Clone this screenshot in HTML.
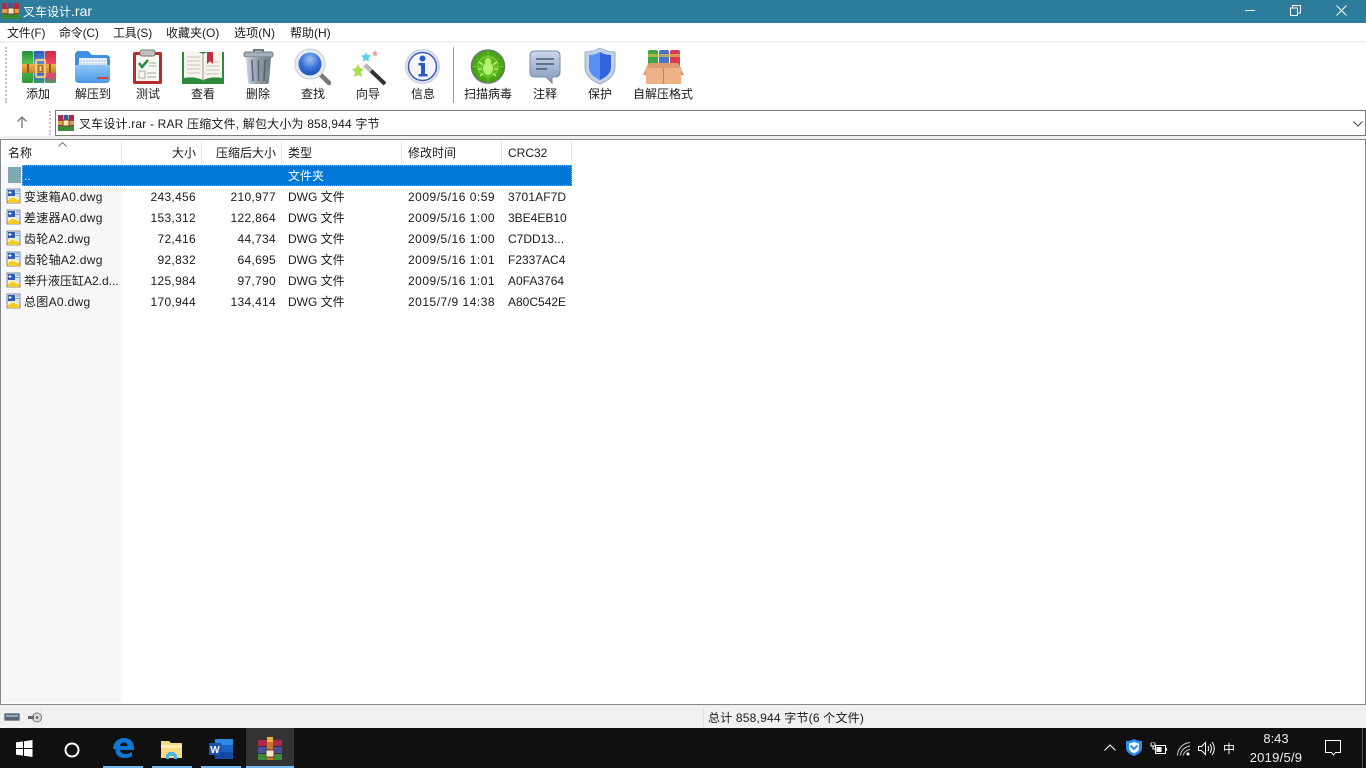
<!DOCTYPE html>
<html lang="zh"><head><meta charset="utf-8"><title>叉车设计.rar</title>
<style>
html,body{margin:0;padding:0;width:1366px;height:768px;overflow:hidden;background:#fff}
body{font-family:"Liberation Sans","Noto Sans CJK SC",sans-serif;font-size:12px;color:#1a1a1a;position:relative}
.a{position:absolute;white-space:nowrap;line-height:16px}
.b{position:absolute}
.r{text-align:right}
.c{text-align:center}
.n{letter-spacing:.3px}
.d{letter-spacing:.5px}
.h{letter-spacing:.1px}
svg{position:absolute;overflow:visible}
</style></head><body>
<svg width="0" height="0"><defs>
<linearGradient id="g1" x1="0" y1="0" x2="0" y2="1"><stop offset="0" stop-color="#1f8f3a"/><stop offset=".35" stop-color="#58c048"/><stop offset="1" stop-color="#2f9a3e"/></linearGradient>
<linearGradient id="g2" x1="0" y1="0" x2="0" y2="1"><stop offset="0" stop-color="#2a5cb8"/><stop offset=".4" stop-color="#5a8ae0"/><stop offset=".8" stop-color="#3a68c8"/><stop offset="1" stop-color="#2fa060"/></linearGradient>
<linearGradient id="g3" x1="0" y1="0" x2="0" y2="1"><stop offset="0" stop-color="#d02840"/><stop offset=".45" stop-color="#f05068"/><stop offset=".8" stop-color="#d84a70"/><stop offset="1" stop-color="#38a858"/></linearGradient>
<linearGradient id="gb" x1="0" y1="0" x2="0" y2="1"><stop offset="0" stop-color="#f0b048"/><stop offset="1" stop-color="#c88428"/></linearGradient>
<linearGradient id="gf" x1="0" y1="0" x2="0" y2="1"><stop offset="0" stop-color="#8ec6f6"/><stop offset="1" stop-color="#4a98e8"/></linearGradient>
<linearGradient id="gt" x1="0" y1="0" x2="1" y2="0"><stop offset="0" stop-color="#c8d2da"/><stop offset=".5" stop-color="#8e9ca8"/><stop offset="1" stop-color="#6e7c88"/></linearGradient>
<radialGradient id="gm" cx=".5" cy=".3" r=".8"><stop offset="0" stop-color="#a0c4f4"/><stop offset=".5" stop-color="#3a72d8"/><stop offset="1" stop-color="#1c48a8"/></radialGradient>
<radialGradient id="gv" cx=".5" cy=".5" r=".55"><stop offset="0" stop-color="#72d020"/><stop offset="1" stop-color="#3c9810"/></radialGradient>
<linearGradient id="gs" x1="0" y1="0" x2="0" y2="1"><stop offset="0" stop-color="#ccd8ea"/><stop offset="1" stop-color="#8298bc"/></linearGradient>
<g id="f"><rect x="1" y="1" width="13" height="14" fill="#dce8fa" stroke="#3a4a68" stroke-width=".6"/><rect x="2" y="2" width="7" height="6" fill="#2e5cb0"/><path d="M4 3v3M2.500 4.500h3" stroke="#fff"/><path d="M10 3h3M9 5.500h4" stroke="#7a9ad0"/><path d="M1.500 15V11l5-3 7 3.500V15z" fill="#f4cc28"/><path d="M1.500 11l5-3 7 3.500v1l-7-3-5 3z" fill="#fff6c0"/></g>
</defs></svg>
<div class="b" style="left:0;top:0;width:1366px;height:23px;background:#2e7c9b"></div>
<svg style="left:2px;top:2px" width="18" height="18" viewBox="0 0 18 18"><rect x="0" y="1" width="5" height="16" fill="#a03050"/><rect x="6" y="1" width="5" height="16" fill="#3a5aa0"/><rect x="12" y="1" width="5" height="16" fill="#b02a3a"/><rect x="0" y="12" width="17" height="5" fill="#3a8a3a"/><rect x="0" y="7" width="17" height="4" fill="#d9a050"/><rect x="6" y="6" width="6" height="6" fill="#f4e4c0" stroke="#7a4a20"/></svg>
<div class="a" style="left:23px;top:3px;color:#fff;font-size:12px">叉车设计<span style="font-size:14px">.rar</span></div>
<div class="b" style="left:1245px;top:10px;width:10px;height:1px;background:#fff"></div>
<svg style="left:1290px;top:5px" width="11" height="11" fill="none" stroke="#fff"><path d="M.5 3h7v7.500h-7zM2.500 3V.5h8v7.500H8"/></svg>
<svg style="left:1336px;top:5px" width="11" height="11" fill="none" stroke="#fff"><path d="M.5.5l10 10M10.500.5l-10 10"/></svg>

<div class="a" style="left:7px;top:25px;letter-spacing:-.2px">文件(F)</div>
<div class="a" style="left:59px;top:25px;letter-spacing:-.2px">命令(C)</div>
<div class="a" style="left:113px;top:25px;letter-spacing:-.2px">工具(S)</div>
<div class="a" style="left:166px;top:25px">收藏夹(O)</div>
<div class="a" style="left:234px;top:25px;letter-spacing:.1px">选项(N)</div>
<div class="a" style="left:290px;top:25px">帮助(H)</div>
<div class="b" style="left:0;top:41px;width:1366px;height:2px;background:#f0f0f0"></div>
<div class="b" style="left:5px;top:47px;height:56px;border-left:2px dotted #c4c4c4"></div>

<!-- toolbar icons -->
<svg style="left:22px;top:50px" width="34" height="34" viewBox="0 0 34 34"><rect x="0" y="1" width="11" height="32" rx="1.500" fill="url(#g1)"/><rect x="11.500" y="1" width="11" height="32" rx="1.500" fill="url(#g2)"/><rect x="23" y="1" width="11" height="32" rx="1.500" fill="url(#g3)"/><rect x="0" y="14" width="34" height="9" fill="url(#gb)"/><rect x="5" y="14" width="2" height="9" fill="#8a5a20"/><rect x="27" y="14" width="2" height="9" fill="#8a5a20"/><rect x="14" y="10" width="9" height="17" rx="1" fill="none" stroke="#e8c880" stroke-width="2.200"/><rect x="16" y="15" width="5" height="7" fill="#a86a20"/><rect x="17.500" y="16" width="2" height="5" fill="#f6d890"/></svg>
<svg style="left:75px;top:50px" width="36" height="34" viewBox="0 0 36 34"><path d="M0 5q0-4 4-4h9l4 4h14q4 0 4 4v20H0z" fill="#3f8fe0"/><rect x="4" y="8" width="28" height="14" fill="#e8f0fa"/><path d="M5 11h26M5 14h26" stroke="#a8bcd8" stroke-dasharray="2 1"/><path d="M0 15h35v14q0 4-4 4H4q-4 0-4-4z" fill="url(#gf)"/><rect x="22" y="27" width="11" height="2" fill="#d8443c"/></svg>
<svg style="left:133px;top:50px" width="29" height="34" viewBox="0 0 29 34"><rect x="0" y="2" width="29" height="32" rx="2" fill="#b62c2c"/><rect x="3" y="5" width="23" height="26" fill="#f6f6f2"/><rect x="7" y="0" width="15" height="6" rx="2" fill="#c0c0c0" stroke="#777"/><path d="M6 13l3 4 6-7" fill="none" stroke="#2c8a3c" stroke-width="2.500"/><path d="M16 13h7M16 16h7M14 23h9M14 27h9" stroke="#aaa"/><rect x="6" y="21" width="6" height="7" fill="none" stroke="#aaa"/></svg>
<svg style="left:182px;top:50px" width="42" height="34" viewBox="0 0 42 34"><path d="M0 2h42v32H0z" fill="#2d8a3c"/><path d="M2 2q10-3 19 2v26q-9-4-19-2z" fill="#f6f4ec"/><path d="M40 2q-10-3-19 2v26q9-4 19-2z" fill="#f6f4ec"/><path d="M5 7h13M5 11h13M5 15h13M5 19h13M5 23h13M24 12h13M24 16h13M24 20h13M24 24h13" stroke="#c4c4be"/><path d="M25 2h6v12l-3-3-3 3z" fill="#c03040"/><path d="M21 4v27" stroke="#999"/></svg>
<svg style="left:243px;top:49px" width="31" height="35" viewBox="0 0 31 35"><path d="M11 3V1h9v2" fill="none" stroke="#777" stroke-width="2"/><rect x="1" y="3" width="29" height="5" rx="2" fill="#a4b0ba" stroke="#6a7680"/><path d="M3 8h25l-2 25q0 2-3 2H8q-3 0-3-2z" fill="url(#gt)"/><path d="M9 11l1 21M15.500 11v21M22 11l-1 21" stroke="#55626e" stroke-width="1.500"/></svg>
<svg style="left:294px;top:48px" width="37" height="37" viewBox="0 0 37 37"><path d="M26 26l9 9" stroke="#777" stroke-width="4.500" stroke-linecap="round"/><circle cx="16" cy="16" r="15" fill="#e6ebf2" stroke="#c4cedb"/><circle cx="16" cy="16" r="11.500" fill="url(#gm)"/></svg>
<svg style="left:352px;top:50px" width="35" height="35" viewBox="0 0 35 35"><path d="M13 15l20 19" stroke="#333" stroke-width="4"/><path d="M13 15l6 6" stroke="#bbb" stroke-width="4"/><path d="M6 14l2 4 4 1-3 3 1 5-4-2-4 2 1-5-3-3 4-1z" fill="#a4e050"/><path d="M14 2l1.500 3 3.500.5-2.500 2.500.5 3.500-3-1.500-3 1.500.5-3.500L9 5.500l3.500-.5z" fill="#58d0e8"/><path d="M23 0l1 2 2 .5-1.500 1.500.5 2.500-2-1-2 1 .5-2.500L20 2.500l2-.5z" fill="#f0a0a8"/></svg>
<svg style="left:405px;top:49px" width="35" height="35" viewBox="0 0 35 35"><circle cx="17.500" cy="17.500" r="17" fill="#dfe4f2" stroke="#c4cce0"/><circle cx="17.500" cy="17.500" r="14" fill="#f4f6fc" stroke="#3e5cb4" stroke-width="1.500"/><circle cx="17.500" cy="9.500" r="3" fill="#2a58c8"/><path d="M13.500 14h6.500v11h2.500v2.500h-9V25h2.500v-8.500h-2.500z" fill="#2a58c8"/></svg>
<div class="b" style="left:453px;top:47px;width:1px;height:56px;background:#9a9a9a"></div>
<svg style="left:471px;top:49px" width="34" height="35" viewBox="0 0 34 35"><circle cx="17" cy="17.500" r="16.500" fill="url(#gv)" stroke="#6a7a6a" stroke-width="1.500"/><circle cx="17" cy="17.500" r="10" fill="none" stroke="#88dc40" opacity=".7"/><path d="M17 1v33M1 17.500h32" stroke="#88dc40" opacity=".5"/><ellipse cx="17" cy="19.500" rx="5" ry="6.500" fill="#b8f070"/><circle cx="17" cy="12" r="3" fill="#b8f070"/><path d="M12 16l-4-3M22 16l4-3M11 20H7M23 20h4M12 24l-3 3M22 24l3 3" stroke="#b8f070" stroke-width="1.500"/></svg>
<svg style="left:529px;top:50px" width="32" height="34" viewBox="0 0 32 34"><path d="M6 1h20q5 0 5 5v16q0 5-5 5h-3v6l-6-6H6q-5 0-5-5V6q0-5 5-5z" fill="url(#gs)" stroke="#7a8ca8"/><path d="M7 9h18M7 14h18M7 19h11" stroke="#4a5a70" stroke-width="1.500"/></svg>
<svg style="left:585px;top:48px" width="30" height="36" viewBox="0 0 30 36"><path d="M15 0q7 4 15 4v15q0 11-15 17Q0 30 0 19V4q8 0 15-4z" fill="#c4d2e8" stroke="#9aacc4"/><path d="M15 4q5 3 11 3v12q0 8-11 13Q4 27 4 19V7q6 0 11-3z" fill="#2e64e0"/><path d="M15 4v28Q4 27 4 19V7q6 0 11-3z" fill="#5a90f4"/></svg>
<svg style="left:643px;top:49px" width="41" height="35" viewBox="0 0 41 35"><rect x="5" y="1" width="10" height="17" rx="2" fill="#42a648"/><rect x="16" y="1" width="10" height="17" rx="2" fill="#4a74c8"/><rect x="27" y="1" width="10" height="17" rx="2" fill="#d83a50"/><rect x="5" y="5" width="32" height="3" fill="#d8c050" opacity=".7"/><path d="M3 19h35v16H3z" fill="#eeb086"/><path d="M6 14l-6 12h3v-7zM35 14l6 12h-3v-7z" fill="#d8906a"/><path d="M6 14h29l3 5H3z" fill="#e09a70"/><path d="M20.500 19v16" stroke="#c87e5a"/></svg>

<div class="a c" style="left:18px;top:86px;width:40px">添加</div>
<div class="a c" style="left:68px;top:86px;width:50px">解压到</div>
<div class="a c" style="left:128px;top:86px;width:40px">测试</div>
<div class="a c" style="left:183px;top:86px;width:40px">查看</div>
<div class="a c" style="left:238px;top:86px;width:40px">删除</div>
<div class="a c" style="left:293px;top:86px;width:40px">查找</div>
<div class="a c" style="left:348px;top:86px;width:40px">向导</div>
<div class="a c" style="left:403px;top:86px;width:40px">信息</div>
<div class="a c" style="left:458px;top:86px;width:60px">扫描病毒</div>
<div class="a c" style="left:525px;top:86px;width:40px">注释</div>
<div class="a c" style="left:580px;top:86px;width:40px">保护</div>
<div class="a c" style="left:628px;top:86px;width:70px">自解压格式</div>

<!-- address bar -->
<svg style="left:16px;top:116px" width="12" height="12" fill="none" stroke="#808080" stroke-width="1.500"><path d="M6 12V1M1.500 5.500L6 1l4.500 4.500"/></svg>
<div class="b" style="left:49px;top:111px;height:24px;border-left:2px dotted #c8c8c8"></div>
<div class="b" style="left:55px;top:110px;width:1309px;height:24px;border:1px solid #7a7a7a;background:#fff"></div>
<svg style="left:58px;top:115px" width="16" height="16" viewBox="0 0 16 16"><rect x="0" y="0" width="5" height="16" fill="#a03050"/><rect x="5.500" y="0" width="5" height="16" fill="#3a5aa0"/><rect x="11" y="0" width="5" height="16" fill="#b02a3a"/><rect x="0" y="11" width="16" height="5" fill="#3a8a3a"/><rect x="0" y="6" width="16" height="4" fill="#d9a050"/><rect x="5" y="5" width="6" height="6" fill="#f4e4c0" stroke="#7a4a20"/></svg>
<div class="a" style="left:79px;top:116px;letter-spacing:.18px">叉车设计.rar - RAR 压缩文件, 解包大小为 858,944 字节</div>
<svg style="left:1353px;top:121px" width="10" height="6" fill="none" stroke="#444"><path d="M.5.500L5 5 9.500.5"/></svg>
<div class="b" style="left:0;top:136px;width:1366px;height:3px;background:#f0f0f0"></div>

<!-- list -->
<div class="b" style="left:0;top:139px;width:1364px;height:564px;border:1px solid #828790;background:#fff"></div>
<div class="b" style="left:1px;top:165px;width:121px;height:538px;background:#f7f7f7"></div>
<div class="b" style="left:121px;top:141px;width:1px;height:24px;background:#e5e5e5"></div>
<div class="b" style="left:201px;top:141px;width:1px;height:24px;background:#e5e5e5"></div>
<div class="b" style="left:281px;top:141px;width:1px;height:24px;background:#e5e5e5"></div>
<div class="b" style="left:401px;top:141px;width:1px;height:24px;background:#e5e5e5"></div>
<div class="b" style="left:501px;top:141px;width:1px;height:24px;background:#e5e5e5"></div>
<div class="b" style="left:571px;top:141px;width:1px;height:24px;background:#e5e5e5"></div>
<svg style="left:58px;top:142px" width="9" height="5" fill="none" stroke="#777"><path d="M.5 4.500L4.500.5l4 4"/></svg>
<div class="a" style="left:8px;top:145px">名称</div>
<div class="a r" style="left:122px;top:145px;width:74px">大小</div>
<div class="a r" style="left:202px;top:145px;width:74px">压缩后大小</div>
<div class="a" style="left:288px;top:145px">类型</div>
<div class="a" style="left:408px;top:145px">修改时间</div>
<div class="a" style="left:508px;top:145px">CRC32</div>

<div class="b" style="left:8px;top:167px;width:13px;height:16px;background:#7fa9b0"></div>
<div class="b" style="left:22px;top:165px;width:550px;height:21px;background:#0078d7;outline:1px dotted #8ab4d8;outline-offset:-1px"></div>
<div class="a" style="left:24px;top:168px;color:#fff">..</div>
<div class="a" style="left:288px;top:168px;color:#fff">文件夹</div>

<svg style="left:6px;top:188px" width="15" height="15"><use href="#f"/></svg>
<svg style="left:6px;top:209px" width="15" height="15"><use href="#f"/></svg>
<svg style="left:6px;top:230px" width="15" height="15"><use href="#f"/></svg>
<svg style="left:6px;top:251px" width="15" height="15"><use href="#f"/></svg>
<svg style="left:6px;top:272px" width="15" height="15"><use href="#f"/></svg>
<svg style="left:6px;top:293px" width="15" height="15"><use href="#f"/></svg>

<div class="a n" style="left:24px;top:189px">变速箱A0.dwg</div><div class="a r n" style="left:122px;top:189px;width:74px">243,456</div><div class="a r n" style="left:202px;top:189px;width:74px">210,977</div><div class="a" style="left:288px;top:189px">DWG 文件</div><div class="a d" style="left:408px;top:189px">2009/5/16 0:59</div><div class="a h" style="left:508px;top:189px">3701AF7D</div>
<div class="a n" style="left:24px;top:210px">差速器A0.dwg</div><div class="a r n" style="left:122px;top:210px;width:74px">153,312</div><div class="a r n" style="left:202px;top:210px;width:74px">122,864</div><div class="a" style="left:288px;top:210px">DWG 文件</div><div class="a d" style="left:408px;top:210px">2009/5/16 1:00</div><div class="a" style="left:508px;top:210px">3BE4EB10</div>
<div class="a n" style="left:24px;top:231px">齿轮A2.dwg</div><div class="a r n" style="left:122px;top:231px;width:74px">72,416</div><div class="a r n" style="left:202px;top:231px;width:74px">44,734</div><div class="a" style="left:288px;top:231px">DWG 文件</div><div class="a d" style="left:408px;top:231px">2009/5/16 1:00</div><div class="a" style="left:508px;top:231px">C7DD13...</div>
<div class="a n" style="left:24px;top:252px">齿轮轴A2.dwg</div><div class="a r n" style="left:122px;top:252px;width:74px">92,832</div><div class="a r n" style="left:202px;top:252px;width:74px">64,695</div><div class="a" style="left:288px;top:252px">DWG 文件</div><div class="a d" style="left:408px;top:252px">2009/5/16 1:01</div><div class="a" style="left:508px;top:252px">F2337AC4</div>
<div class="a" style="left:24px;top:273px">举升液压缸A2.d...</div><div class="a r n" style="left:122px;top:273px;width:74px">125,984</div><div class="a r n" style="left:202px;top:273px;width:74px">97,790</div><div class="a" style="left:288px;top:273px">DWG 文件</div><div class="a d" style="left:408px;top:273px">2009/5/16 1:01</div><div class="a" style="left:508px;top:273px">A0FA3764</div>
<div class="a n" style="left:24px;top:294px">总图A0.dwg</div><div class="a r n" style="left:122px;top:294px;width:74px">170,944</div><div class="a r n" style="left:202px;top:294px;width:74px">134,414</div><div class="a" style="left:288px;top:294px">DWG 文件</div><div class="a d" style="left:408px;top:294px">2015/7/9 14:38</div><div class="a" style="left:508px;top:294px">A80C542E</div>

<!-- status -->
<div class="b" style="left:0;top:705px;width:1366px;height:23px;background:#f0f0f0"></div>
<div class="b" style="left:41px;top:707px;width:1px;height:20px;background:#e0e0e0"></div>
<div class="b" style="left:703px;top:707px;width:1px;height:20px;background:#e0e0e0"></div>
<svg style="left:4px;top:712px" width="36" height="11"><rect x=".5" y="1.500" width="15" height="7" rx="1" fill="#5a6672" stroke="#8a949c"/><rect x="2" y="3" width="12" height="2" fill="#9ab"/><circle cx="33" cy="5.500" r="4.500" fill="#ddd" stroke="#777"/><circle cx="33" cy="5.500" r="1.500" fill="#777"/><path d="M24 4h6v3h-6z" fill="#666"/></svg>
<div class="a" style="left:708px;top:710px;letter-spacing:.2px">总计 858,944 字节(6 个文件)</div>

<!-- taskbar -->
<div class="b" style="left:0;top:728px;width:1366px;height:40px;background:#101010"></div>
<div class="b" style="left:246px;top:728px;width:48px;height:40px;background:#333"></div>
<div class="b" style="left:103px;top:766px;width:40px;height:2px;background:#76b9ed"></div>
<div class="b" style="left:152px;top:766px;width:40px;height:2px;background:#76b9ed"></div>
<div class="b" style="left:201px;top:766px;width:40px;height:2px;background:#76b9ed"></div>
<div class="b" style="left:246px;top:766px;width:48px;height:2px;background:#76b9ed"></div>
<svg style="left:16px;top:740px" width="17" height="17" fill="#fff"><path d="M0 2.400l7-1v6.600H0zM8 1.200L16.500 0v8H8zM0 9h7v6.600l-7-1zM8 9h8.500v8L8 15.800z"/></svg>
<svg style="left:64px;top:742px" width="16" height="16" fill="none" stroke="#fff" stroke-width="2"><circle cx="8" cy="8" r="6.500"/></svg>
<svg style="left:113px;top:738px" width="21" height="20" viewBox="0 0 21 20"><path d="M0 10C1 3 6 0 11 0c6 0 10 4 10 10v2H7c.5 2.500 2.500 4 5 4 3 0 5-1 7-2v4c-2 1.500-5 2-7.500 2C5 20 2 16 2.500 11 1.500 11.500.5 11 0 10zm7-2h7.500c0-2.500-1.500-3.500-3.500-3.500S7.500 5.500 7 8z" fill="#0a78d4"/></svg>
<svg style="left:161px;top:740px" width="22" height="19" viewBox="0 0 22 19"><path d="M0 1h8l2 2h11v15H0z" fill="#f6d982"/><path d="M0 5h21v3H0z" fill="#fff0b8"/><path d="M5 19v-4l3-3h5l3 3v4h-3v-3H8v3z" fill="#4ab4e4"/></svg>
<svg style="left:209px;top:739px" width="24" height="20" viewBox="0 0 24 20"><rect x="6" y="0" width="18" height="20" fill="#1d5fc4"/><rect x="6" y="0" width="18" height="6" fill="#2e88e0"/><rect x="6" y="13" width="18" height="7" fill="#134aa0"/><rect x="0" y="4" width="12" height="12" fill="#1a50b0"/><text x="6" y="14" font-size="10" font-weight="bold" fill="#fff" text-anchor="middle" font-family="Liberation Sans">W</text></svg>
<svg style="left:258px;top:737px" width="24" height="23" viewBox="0 0 24 23"><rect x="0" y="3" width="24" height="6" fill="#b02a48"/><rect x="0" y="10" width="24" height="6" fill="#4a4ea0"/><rect x="0" y="17" width="24" height="6" fill="#3a8a3c"/><rect x="9" y="0" width="6" height="23" fill="#c87828"/><rect x="9" y="0" width="6" height="5" fill="#f0b040"/><rect x="8" y="13" width="8" height="7" fill="#f4e8d0" stroke="#6a3a18"/></svg>
<svg style="left:1104px;top:744px" width="12" height="7" fill="none" stroke="#fff"><path d="M.5 6.500L6 1l5.500 5.500"/></svg>
<svg style="left:1126px;top:739px" width="16" height="17" viewBox="0 0 16 17"><path d="M8 0q4 2 8 2v7q0 5-8 8-8-3-8-8V2q4 0 8-2z" fill="#2a8cf0"/><path d="M8 3q2.500 1 5 1.500V9q0 3-5 5.500Q3 12 3 9V4.500Q5.500 4 8 3z" fill="#fff"/><path d="M4.500 6.500L8 10l3.500-3.500" fill="none" stroke="#2a8cf0" stroke-width="2"/></svg>
<svg style="left:1150px;top:742px" width="17" height="13" fill="none" stroke="#fff"><rect x="5.500" y="3.500" width="10" height="8"/><rect x="6.500" y="5" width="5" height="5" fill="#fff" stroke="none"/><path d="M16.500 6v3M1 1v3h4V1M3 4v3h3M2 0v1M4 0v1"/></svg>
<svg style="left:1177px;top:742px" width="14" height="14" fill="none" stroke="#ccc"><path d="M.5 13.500C.5 7 6 1 13 .5M3.500 13.500C3.500 9 8 4.500 13 4M6.500 13.500c0-3 3-5.500 6.500-6"/><circle cx="11" cy="12" r="1.500" fill="#fff" stroke="none"/></svg>
<svg style="left:1198px;top:741px" width="16" height="15" fill="none" stroke="#fff"><path d="M.5 5.500h3L7.500 1.500v12l-4-4h-3zM10 5q1.500 2.500 0 5M12 3q3 4.500 0 9M14 1q4.500 6.500 0 13"/></svg>
<div class="a" style="left:1223px;top:741px;color:#fff;font-size:12px">中</div>
<div class="a c" style="left:1244px;top:731px;width:64px;color:#eee;font-size:13px">8:43</div>
<div class="a c" style="left:1244px;top:750px;width:64px;color:#eee;font-size:13px;letter-spacing:.25px">2019/5/9</div>
<svg style="left:1325px;top:740px" width="17" height="16" fill="none" stroke="#fff"><path d="M.5.500h15v12h-5l-2 2.500-2-2.500h-6z"/></svg>
<div class="b" style="left:1362px;top:728px;width:1px;height:40px;background:#555"></div>
</body></html>
